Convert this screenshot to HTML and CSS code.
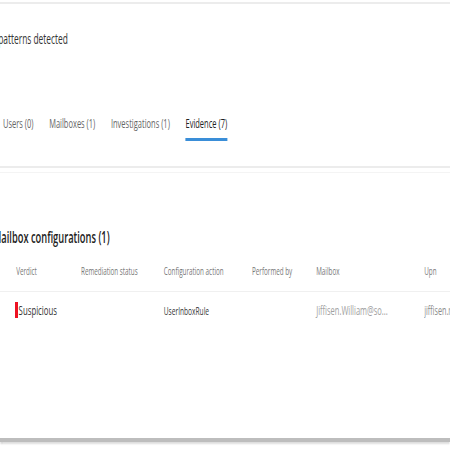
FILE: index.html
```html
<!DOCTYPE html>
<html>
<head>
<meta charset="utf-8">
<link rel="stylesheet" href="styles.css">
</head>
<body>
<div class="page">
  <section class="summary">
    <h2 class="summary-title">patterns detected</h2>
    <nav class="tabs">
      <span class="tab">Users (0)</span>
      <span class="tab">Mailboxes (1)</span>
      <span class="tab">Investigations (1)</span>
      <span class="tab active">Evidence (7)</span>
    </nav>
  </section>
  <section class="evidence">
    <h3 class="evidence-title">Mailbox configurations (1)</h3>
    <div class="table">
      <div class="row head">
        <span>Verdict</span>
        <span>Remediation status</span>
        <span>Configuration action</span>
        <span>Performed by</span>
        <span>Mailbox</span>
        <span>Upn</span>
      </div>
      <div class="row data">
        <span class="verdict"><i class="flag"></i>Suspicious</span>
        <span></span>
        <span class="dark">UserInboxRule</span>
        <span></span>
        <span class="light">Jiffisen.William@so...</span>
        <span class="mid">jiffisen.r</span>
      </div>
    </div>
  </section>
</div>
</body>
</html>
```
FILE: styles.css
```css
html, body {
  margin: 0;
  padding: 0;
  background: #ffffff;
}
body {
  font-family: "Open Sans", "Noto Sans", sans-serif;
  color: #333;
  overflow: hidden;
  width: 450px;
  height: 450px;
}
.page {
  padding-top: 2px;
  width: 750px;
  transform: scaleX(0.6);
  transform-origin: 0 0;
}
.summary {
  border-top: 2px solid #ececec;
  border-bottom: 2px solid #ececec;
  height: 166px;
  box-sizing: border-box;
  display: flex;
  flex-direction: column;
}
.summary-title {
  margin: 0;
  margin-top: 25px;
  margin-left: -3px;
  font-size: 14px;
  font-weight: normal;
  color: #333;
}
.tabs {
  display: flex;
  gap: 26px;
  margin-top: 67px;
  margin-left: 5px;
}
.tab {
  font-size: 12.5px;
  color: #666;
  padding-bottom: 6px;
  border-bottom: 3px solid transparent;
}
.tab.active {
  color: #222;
  border-bottom-color: #3a8ed8;
}
.evidence {
  border-top: 1px solid #f4f4f4;
  margin-top: 4px;
  height: 270px;
  box-sizing: border-box;
  border-bottom: 4px solid #bdbdbd;
  box-shadow: 0 2px 2px #d8d8d8;
  display: flex;
  flex-direction: column;
}
.evidence-title {
  margin: 0;
  margin-top: 53px;
  margin-left: -12px;
  font-size: 15.5px;
  font-weight: 600;
  color: #222;
}
.table {
  margin-top: 8px;
}
.row {
  display: grid;
  grid-template-columns: 27px 108px 138px 147px 107px 180px 1fr;
  align-items: center;
  white-space: nowrap;
}
.row::before {
  content: "";
}
.row.head {
  font-size: 10.5px;
  color: #777;
  padding: 8px 0 13px;
  border-bottom: 1px solid #f0f0f0;
}
.row.data {
  font-size: 12px;
  height: 36px;
}
.verdict {
  display: flex;
  align-items: center;
  color: #333;
  margin-left: -2px;
  font-size: 13px;
}
.flag {
  display: inline-block;
  width: 5px;
  height: 16px;
  background: #ee1122;
  margin-right: 1px;
}
.dark { color: #333; font-size: 11px; }
.light { color: #a0a0a0; font-size: 12.5px; }
.mid { color: #8a8a8a; overflow: hidden; }
```
